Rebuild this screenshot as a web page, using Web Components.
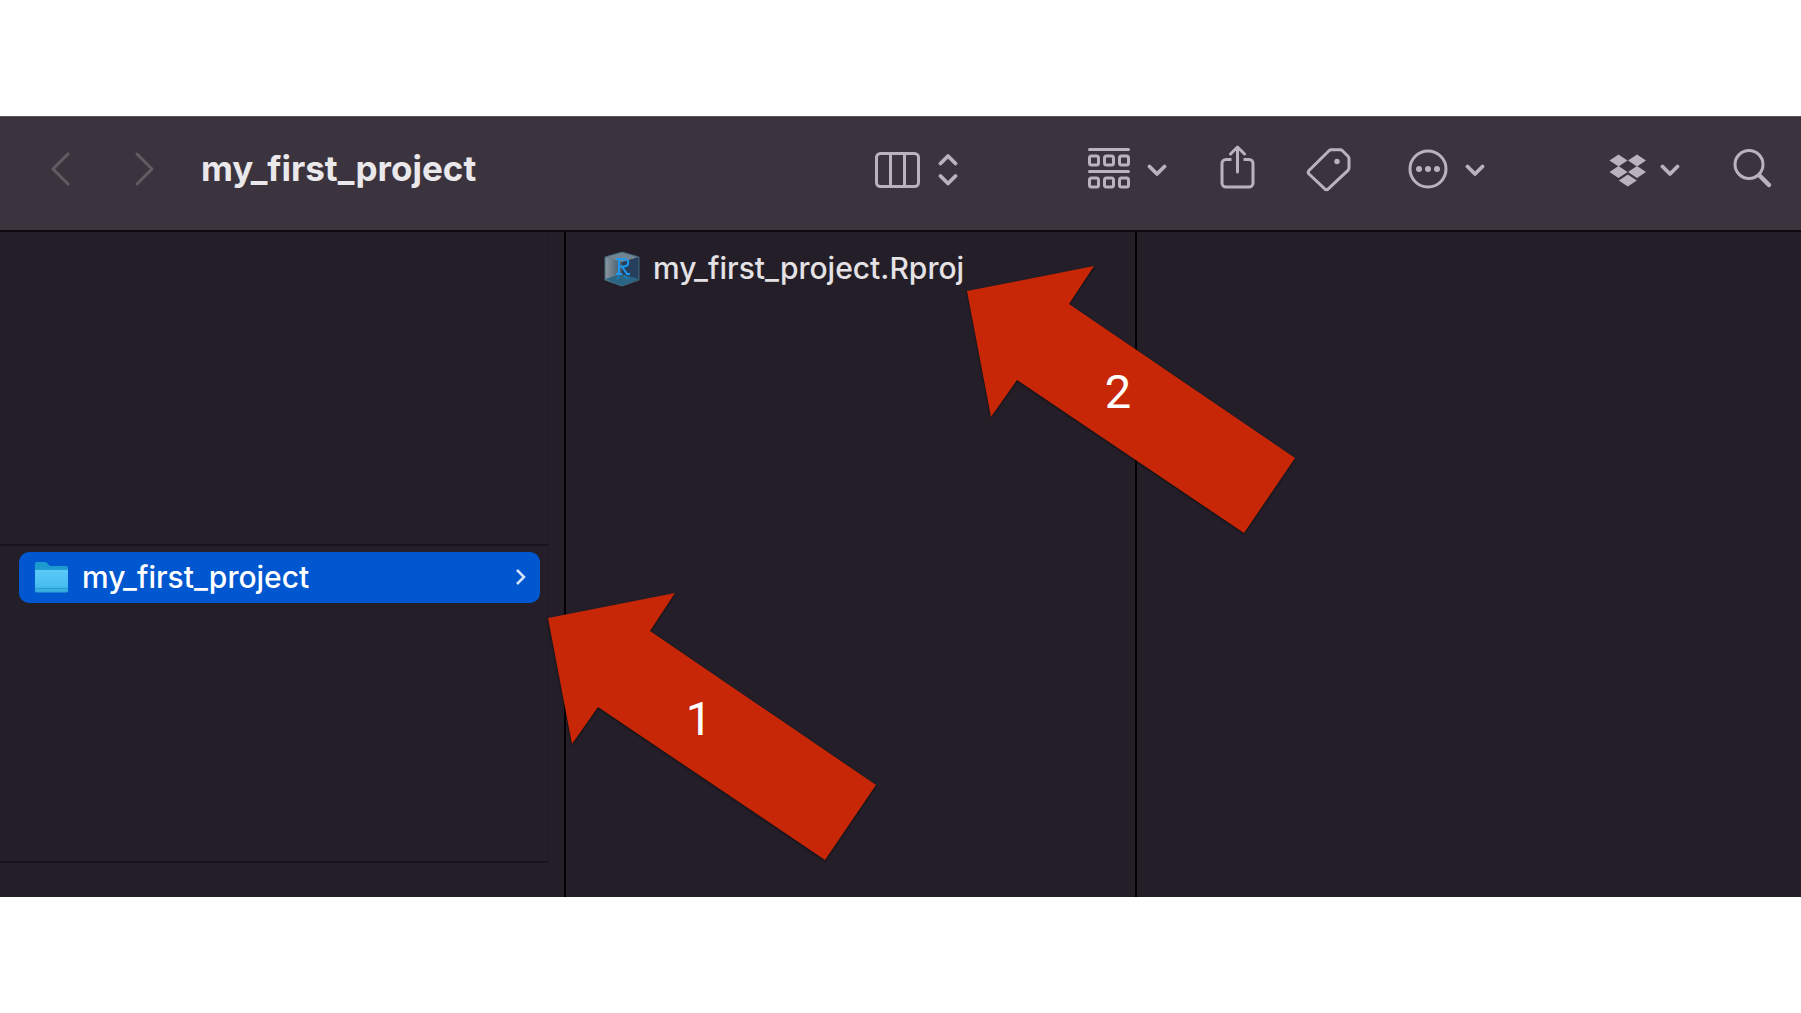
<!DOCTYPE html>
<html lang="en">
<head>
<meta charset="utf-8">
<title>my_first_project</title>
<style>
  html, body { margin: 0; height: 100%; background: #fff; }
  body { display: flex; flex-direction: column; justify-content: center; font-family: Inter, "Liberation Sans", sans-serif; }
</style>
</head>
<body>
<finder-window>
  <finder-toolbar slot="toolbar" heading="my_first_project"></finder-toolbar>
  <finder-column slot="columns" class="first">
    <column-band class="upper"></column-band>
    <column-band class="lower"><finder-item kind="folder" selected>my_first_project</finder-item></column-band>
  </finder-column>
  <finder-column slot="columns" class="second"><finder-item kind="rproj">my_first_project.Rproj</finder-item></finder-column>
  <finder-column slot="columns" class="third"></finder-column>
  <step-arrow slot="notes" class="one">1</step-arrow>
  <step-arrow slot="notes" class="two">2</step-arrow>
</finder-window>
<script>
const define = (name, html) => customElements.define(name, class extends HTMLElement {
  connectedCallback() {
    if (this.shadowRoot) return;
    const root = this.attachShadow({ mode: 'open' });
    root.innerHTML = typeof html === 'function' ? html(this) : html;
  }
});

define('finder-window', `
<style>
  :host { display: flex; flex-direction: column; position: relative; background: #241e28; color: #e4e2e5; }
  .columns { display: flex; min-height: 665px; }
  ::slotted(.first) { flex: 565 1 0; border-right: 2px solid #000; }
  ::slotted(.second) { flex: 570 1 0; border-right: 2px solid #000; }
  ::slotted(.third) { flex: 665 1 0; }
  ::slotted(step-arrow) { position: absolute; }
  ::slotted(.one) { left: 548px; top: 477px; }
  ::slotted(.two) { left: 967px; top: 150px; }
</style>
<slot name="toolbar"></slot>
<main class="columns"><slot name="columns"></slot></main>
<slot name="notes"></slot>`);

const down = '<svg width="20" height="48" viewBox="0 0 20 48"><path d="M2.500 21.500l7.500 7.500 7.500-7.500" stroke-width="3.800"/></svg>';
define('finder-toolbar', el => `
<style>
  :host { display: block; background: #3b343e; border-top: 1px solid #59535c; border-bottom: 2px solid #0d0a0f; }
  header { display: flex; align-items: center; box-sizing: border-box; height: 113px; padding: 0 28px 10px 50px; }
  nav { display: flex; gap: 64px; color: #615b64; }
  h1 { flex: 1; margin: 0 0 2px 47px; font-size: 35px; line-height: 40px; font-weight: 700; color: #eae8eb; }
  .tools { display: flex; color: #bab3bf; }
  button { display: flex; align-items: center; padding: 0; border: 0; background: none; color: inherit; }
  svg { display: block; fill: none; stroke: currentColor; stroke-width: 3; stroke-linecap: round; stroke-linejoin: round; }
  .tools button { gap: 17px; }
  .group { margin-left: 130px; }
  .share { margin-left: 53px; }
  .tag { margin-left: 51px; }
  .more { margin-left: 56px; }
  .box { margin-left: 124px; }
  .box.box { gap: 13px; }
  .find { margin-left: 53px; }
</style>
<header>
  <nav>
    <button aria-label="Back"><svg width="20" height="48" viewBox="0 0 20 48"><path d="M18 9L3 24l15 15"/></svg></button>
    <button aria-label="Forward"><svg width="20" height="48" viewBox="0 0 20 48"><path d="M3 9l15 15L3 39"/></svg></button>
  </nav>
  <h1>${el.getAttribute('heading')}</h1>
  <div class="tools">
    <button aria-label="View as columns"><svg width="46" height="48" viewBox="0 0 46 48"><rect x="1.500" y="8.500" width="42" height="33" rx="4"/><path d="M15.500 9v32M29.500 9v32"/></svg><svg width="20" height="48" viewBox="0 0 20 48"><path d="M2.500 18.500l7.500-7.500 7.500 7.500M2.500 31l7.500 7.500 7.500-7.500" stroke-width="3.800"/></svg></button>
    <button class="group" aria-label="Group items"><svg width="42" height="48" viewBox="0 0 42 48"><path d="M1.500 4.500h39M1.500 26.500h39"/><g><rect x="1.500" y="11" width="9" height="9" rx="2"/><rect x="16.500" y="11" width="9" height="9" rx="2"/><rect x="31.500" y="11" width="9" height="9" rx="2"/><rect x="1.500" y="33" width="9" height="9" rx="2"/><rect x="16.500" y="33" width="9" height="9" rx="2"/><rect x="31.500" y="33" width="9" height="9" rx="2"/></g></svg>${down}</button>
    <button class="share" aria-label="Share"><svg width="35" height="48" viewBox="0 0 35 48"><path stroke-linecap="butt" d="M11.500 14.500H6a4 4 0 0 0-4 4V38a4 4 0 0 0 4 4h23a4 4 0 0 0 4-4V18.500a4 4 0 0 0-4-4h-5.500"/><path d="M17.500 27V2.500M10.500 9l7-7 7 7"/></svg></button>
    <button class="tag" aria-label="Tags"><svg width="46" height="48" viewBox="0 0 46 48"><path d="M3 25.500L23 5.800q1-1 2.400-1H34q1.500 0 2.500 1l5.500 5.500q1 1 1 2.500v9q0 1.500-1 2.500L22.500 43.700q-2 2-4 0L3 29q-1.600-1.700 0-3.500z"/><circle cx="31" cy="16.500" r="2.700" fill="currentColor" stroke="none"/></svg></button>
    <button class="more" aria-label="More"><svg width="40" height="48" viewBox="0 0 40 48"><circle cx="20" cy="24" r="18"/><g fill="currentColor" stroke="none"><circle cx="11" cy="24" r="3"/><circle cx="20" cy="24" r="3"/><circle cx="29" cy="24" r="3"/></g></svg>${down}</button>
    <button class="box" aria-label="Dropbox"><svg width="38" height="48" viewBox="0 0 38 48"><path fill="currentColor" stroke="none" d="M9.500 9.500l9 6-9 6-9-6zM28 9.500l9 6-9 6-9-6zM9.500 21l9 6-9 6-9-6zM28 21l9 6-9 6-9-6zM18.800 29.500l9 6-9 6-9-6z"/></svg>${down}</button>
    <button class="find" aria-label="Search"><svg width="40" height="48" viewBox="0 0 40 48"><circle cx="16" cy="19.500" r="14"/><path d="M27 31l9 9" stroke-width="4.500"/></svg></button>
  </div>
</header>`);

define('finder-column', `
<style>:host { display: flex; flex-direction: column; box-sizing: border-box; min-width: 0; }</style>
<slot></slot>`);

define('column-band', `
<style>
  :host { display: block; box-sizing: border-box; margin-right: 15px; border-bottom: 2px solid #19141b; border-right: 1px solid #211b24; }
  :host(.upper) { height: 314px; }
  :host(.lower) { height: 317px; }
</style>
<slot></slot>`);

const art = {
  folder: `<svg width="34" height="34" viewBox="0 0 34 34"><defs><linearGradient id="f" x2="0" y2="1"><stop stop-color="#5ccbfb"/><stop offset=".7" stop-color="#49bdf0"/><stop offset="1" stop-color="#2fa6d8"/></linearGradient></defs><path fill="#1c9bd0" d="M0 3q0-2 2-2h8q1 0 2 1l2 2q1 1 2 1h15q2 0 2 2v23H0z"/><path fill="url(#f)" d="M0 8h33v22q0 1.500-2 1.500H2q-2 0-2-1.500z"/><path stroke="#269fd0" d="M0 8.500h33M0 27.500h33"/></svg>`,
  rproj: `<svg width="36" height="36" viewBox="0 0 36 36"><defs><linearGradient id="l"><stop stop-color="#8d99a2"/><stop offset="1" stop-color="#3c5568"/></linearGradient></defs><path fill="#708492" d="M18 1l17 5-17 6L1 6z"/><path fill="url(#l)" d="M1 6l17 5v24L1 29z"/><path fill="#263f5d" d="M35 6l-17 5v24l17-6z"/><path fill="#2a6683" d="M1 28l17-5 17 5-17 7z"/><path fill="none" stroke="#42697c" d="M18 1l17 5v23l-17 6L1 29V6z"/><path d="M12 8h7c7 0 7 7.500 0 7.500h-4M15 8v15M12 23h6M18 15.500l5 7.500h3" fill="none" stroke="#1e9af0" stroke-width="2"/><path d="M13 28l2-3M20 25l4 3" stroke="#1b7fc4" stroke-width="1.500"/></svg>`
};
define('finder-item', el => `
<style>
  :host { display: block; padding: 6px 8px 0 19px; }
  button { display: flex; align-items: center; width: 100%; height: 51px; padding: 0 13px 0 16px; border: 0; border-radius: 10px; background: none; color: inherit; font: 500 30px/40px Inter, "Liberation Sans", sans-serif; text-align: left; }
  .name { flex: 1; margin: 0 0 2px 13px; }
  svg { display: block; flex: none; }
  :host([selected]) button { background: #0057cf; color: #fff; }
  :host([kind=rproj]) { padding-top: 11px; }
  :host([kind=rproj]) button { padding-left: 19px; }
</style>
<button>${art[el.getAttribute('kind')]}<span class="name"><slot></slot></span>${el.hasAttribute('selected') ? '<svg width="12" height="20" viewBox="0 0 12 20"><path d="M2 2l7 7-7 7" fill="none" stroke="#d5e4fa" stroke-width="2.500"/></svg>' : ''}</button>`);

define('step-arrow', `
<style>
  :host { display: block; width: 328px; height: 268px; color: #fff; font: 400 47px/56px Roboto, sans-serif; }
  .box { position: relative; }
  svg { display: block; overflow: visible; filter: drop-shadow(0 1px 1px rgba(0,0,0,.6)); }
  .label { position: absolute; left: 0; top: 98px; width: 302px; text-align: center; }
</style>
<div class="box"><svg width="328" height="268" viewBox="0 0 328 268"><path fill="#c72707" d="M0 25L127 0l-25 38 226 154-51 75L50 114l-26 37z"/></svg><span class="label"><slot></slot></span></div>`);
</script>
</body>
</html>
